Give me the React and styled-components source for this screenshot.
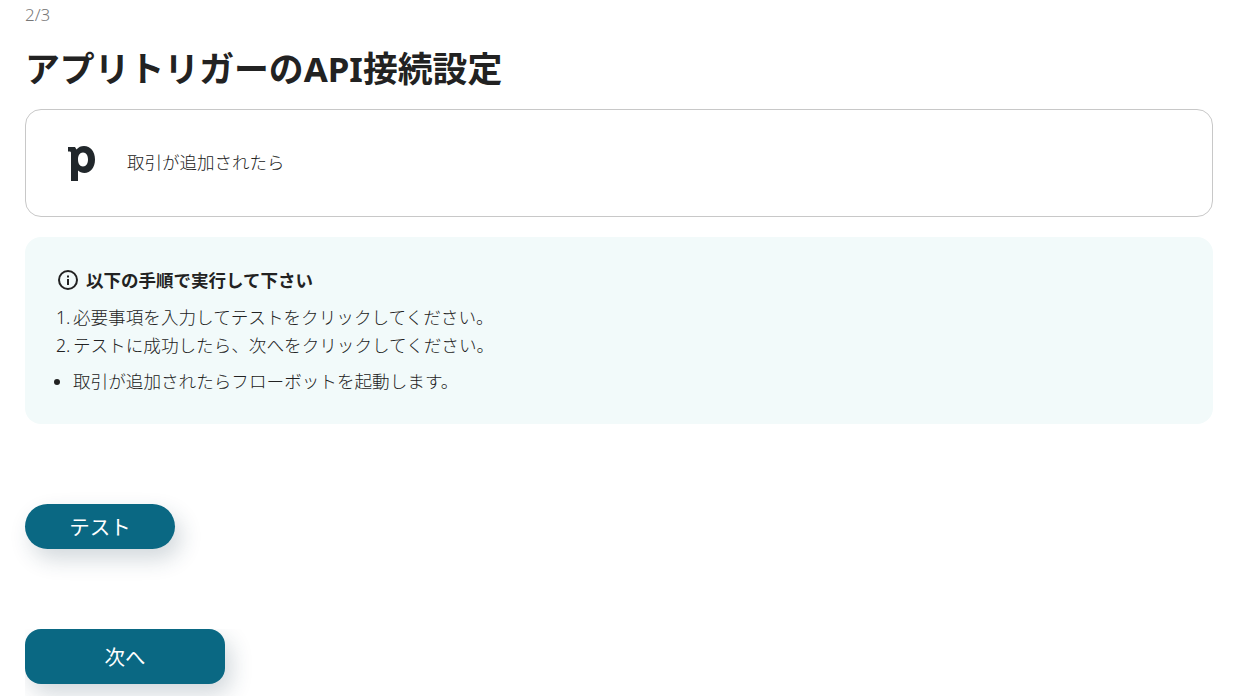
import React from 'react';
import styled, { createGlobalStyle } from 'styled-components';

const GlobalStyle = createGlobalStyle`
  html, body {
    margin: 0;
    padding: 0;
    background: #fff;
    height: 696px;
    overflow: hidden;
  }
  body {
    font-family: "Noto Sans", "Noto Sans CJK JP", sans-serif;
    color: #222;
  }
`;

const Page = styled.div`
  display: flex;
  flex-direction: column;
  height: 696px;
  padding: 0 21px 0 25px;
  overflow: hidden;
`;

const Step = styled.div`
  font-size: 17px;
  line-height: 30px;
  height: 30px;
  color: #777;
  font-weight: 300;
`;

const Title = styled.h1`
  margin: 15px 0 0;
  font-size: 34.85px;
  line-height: 48px;
  font-weight: 700;
  color: #222;
`;

const TriggerCard = styled.div`
  display: flex;
  align-items: center;
  height: 108px;
  box-sizing: border-box;
  margin-top: 16px;
  padding-left: 32px;
  gap: 20px;
  border: 1px solid #c8c8c8;
  border-radius: 16px;
`;

const LogoBox = styled.div`
  display: flex;
  align-items: center;
  justify-content: center;
  width: 49px;
  height: 49px;
`;

const LogoMark = styled.svg`
  width: 27px;
  height: 35px;
  margin: 1px 0 0 -2px;
`;

const TriggerLabel = styled.span`
  font-size: 17.5px;
  line-height: 24px;
  padding-bottom: 2px;
  font-weight: 300;
  color: #222;
`;

const InfoPanel = styled.section`
  margin-top: 20px;
  height: 187px;
  box-sizing: border-box;
  padding: 28px 32px 0;
  background: #f2fafa;
  border-radius: 16px;
`;

const InfoHead = styled.div`
  display: flex;
  align-items: center;
  gap: 7px;
  height: 30px;
  font-size: 17.5px;
  font-weight: 700;
  color: #222;
`;

const InfoHeadText = styled.span`
  padding-bottom: 2px;
`;

const Steps = styled.ol`
  margin: 8px 0 0 -1px;
  padding: 0;
  list-style: none;
  font-size: 17.6px;
  line-height: 28px;
  font-weight: 300;
  word-spacing: -2px;
`;

const Notes = styled.ul`
  margin: 8px 0 0;
  padding: 0 0 0 16px;
  font-size: 17.6px;
  line-height: 28px;
  font-weight: 300;
`;

const TestButton = styled.button`
  display: block;
  width: 150px;
  height: 45px;
  margin-top: 80px;
  padding: 0 0 2px;
  border: 0;
  border-radius: 23px;
  background: #0a6883;
  color: #fff;
  font: 400 20.5px "Noto Sans", "Noto Sans CJK JP", sans-serif;
  box-shadow: 6px 10px 22px rgba(30, 60, 80, 0.2);
`;

const NextClip = styled.div`
  margin-top: 80px;
  width: 240px;
  overflow: hidden;
  flex: none;
  height: 67px;
`;

const NextButton = styled.button`
  display: block;
  width: 200px;
  height: 55px;
  padding: 0 0 2px;
  border: 0;
  border-radius: 16px;
  background: #0a6883;
  color: #fff;
  font: 400 20.5px "Noto Sans", "Noto Sans CJK JP", sans-serif;
  box-shadow: 6px 10px 22px rgba(30, 60, 80, 0.2);
`;

function PipedriveLogo() {
  return (
    <LogoMark viewBox="0 0 27 35" aria-hidden="true">
      <path
        fill="#21272b"
        fillRule="evenodd"
        d="M0 1h7l1.500 2.500C10.500 1 13 0 16 0c6.500 0 11 5.500 11 13.500S22.500 27 16.500 27c-2.700 0-5-1-6.500-2.500V35H3V7c0-1-.4-1.500-1.500-1.500H0zM15 6.500c-3.300 0-5 3-5 7s1.700 7 5 7 5-3 5-7-1.700-7-5-7z"
      />
    </LogoMark>
  );
}

function InfoIcon() {
  return (
    <svg width="22" height="22" viewBox="0 0 22 22" fill="none" aria-hidden="true">
      <circle cx="11" cy="11" r="9" stroke="#222" strokeWidth="2" />
      <rect x="10" y="10" width="2" height="6" fill="#222" />
      <rect x="10" y="6.500" width="2" height="2" fill="#222" />
    </svg>
  );
}

export default function App() {
  return (
    <>
      <GlobalStyle />
      <Page>
        <Step>2/3</Step>
        <Title>アプリトリガーのAPI接続設定</Title>
        <TriggerCard>
          <LogoBox>
            <PipedriveLogo />
          </LogoBox>
          <TriggerLabel>取引が追加されたら</TriggerLabel>
        </TriggerCard>
        <InfoPanel>
          <InfoHead>
            <InfoIcon />
            <InfoHeadText>以下の手順で実行して下さい</InfoHeadText>
          </InfoHead>
          <Steps>
            <li>1. 必要事項を入力してテストをクリックしてください。</li>
            <li>2. テストに成功したら、次へをクリックしてください。</li>
          </Steps>
          <Notes>
            <li>取引が追加されたらフローボットを起動します。</li>
          </Notes>
        </InfoPanel>
        <TestButton>テスト</TestButton>
        <NextClip>
          <NextButton>次へ</NextButton>
        </NextClip>
      </Page>
    </>
  );
}
